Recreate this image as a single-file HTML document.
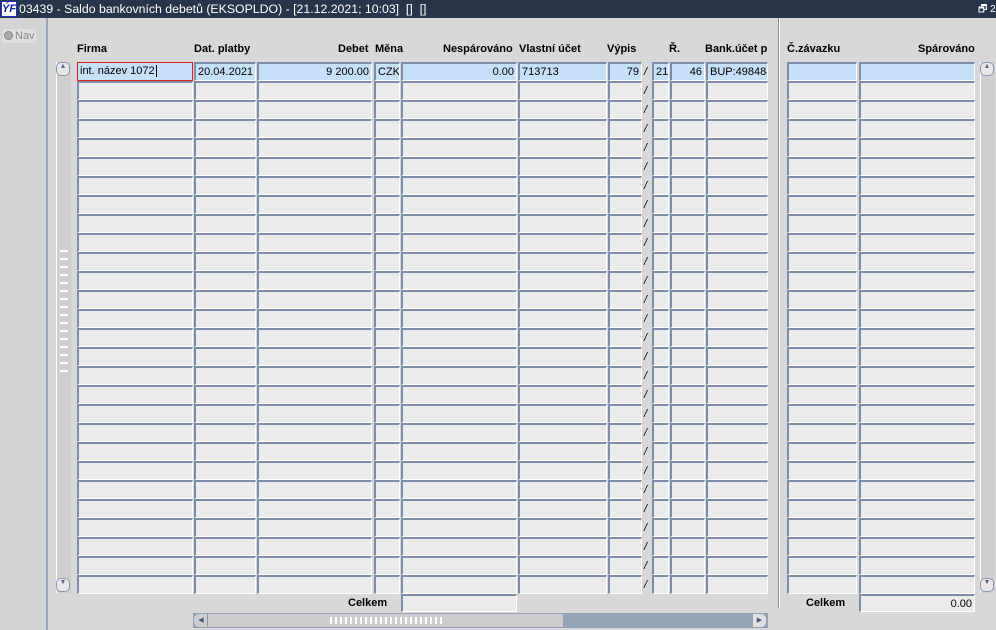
<!DOCTYPE html>
<html><head><meta charset="utf-8"><style>
*{margin:0;padding:0;box-sizing:border-box}
body{width:996px;height:630px;background:#d8d8d8;font-family:"Liberation Sans",Arial,sans-serif;font-size:11px;position:relative;overflow:hidden;color:#000}
.a{position:absolute}
.title{left:0;top:0;width:996px;height:18px;background:#27344a;color:#fff;font-size:12.3px;line-height:18px;padding-left:19px}
.logo{left:1px;top:1px;width:16px;height:16px;background:#fff;border:1px solid #2030c0;color:#1020c0;font:bold italic 11px "Liberation Sans";line-height:14px;text-align:center}
.c{position:absolute;height:19px;background:#ebebeb;border-top:2px solid #7d8ca8;border-left:2px solid #7d8ca8;border-right:1px solid #fff;border-bottom:1px solid #fff;line-height:16px;padding:0 2px;white-space:nowrap;overflow:hidden}
.s{background:#c6e0f8}
.r{text-align:right}
.h{position:absolute;top:43px;font-weight:bold;font-size:11px}
.sl{position:absolute;font-size:11px;font-style:italic}
</style></head><body>
<div class="a title">03439 - Saldo bankovních debetů (EKSOPLDO) - [21.12.2021; 10:03]&nbsp; [] &nbsp;[]</div>
<div class="a logo">ÝF</div>
<div class="a" style="left:978px;top:2px;color:#fff;font-size:10px">🗗 2</div>
<div class="a" style="left:0;top:18px;width:48px;height:612px;background:#d4d4d4;border-right:2px solid #9aa6bb"></div>
<div class="a" style="left:3px;top:29px;width:33px;height:14px;background:#e0e0e0;color:#888;font-size:11px;line-height:14px;padding-left:12px">Nav</div>
<div class="a" style="left:4px;top:31px;width:9px;height:9px;border-radius:50%;background:#aaa;border:1px solid #888"></div>
<div class="a" style="left:56px;top:62px;width:15px;height:531px;background:#cfcfcf;border-left:1px solid #fff"></div>
<div class="a" style="left:56px;top:62px;width:14px;height:14px;border-radius:5px;border:1px solid #8a98b0;background:#e8e8e8;font-size:7px;text-align:center;color:#5a6a88">▲</div>
<div class="a" style="left:56px;top:578px;width:14px;height:14px;border-radius:5px;border:1px solid #8a98b0;background:#e8e8e8;font-size:7px;text-align:center;color:#5a6a88">▼</div>
<div class="a" style="left:60px;top:246px;width:8px;height:130px;background:repeating-linear-gradient(#cfcfcf 0 4px,#fff 4px 6px,#cfcfcf 6px 8px)"></div>
<div class="a" style="left:980px;top:62px;width:15px;height:531px;background:#cfcfcf;border-left:1px solid #fff"></div>
<div class="a" style="left:980px;top:62px;width:14px;height:14px;border-radius:5px;border:1px solid #8a98b0;background:#e8e8e8;font-size:7px;text-align:center;color:#5a6a88">▲</div>
<div class="a" style="left:980px;top:578px;width:14px;height:14px;border-radius:5px;border:1px solid #8a98b0;background:#e8e8e8;font-size:7px;text-align:center;color:#5a6a88">▼</div>
<div class="a" style="left:778px;top:18px;width:2px;height:590px;background:#8a8a8a;border-right:1px solid #fff"></div>
<div class="h" style="left:77px">Firma</div>
<div class="h" style="left:194px">Dat. platby</div>
<div class="h" style="left:338px">Debet</div>
<div class="h" style="left:375px">Měna</div>
<div class="h" style="left:443px">Nespárováno</div>
<div class="h" style="left:519px">Vlastní účet</div>
<div class="h" style="left:607px">Výpis</div>
<div class="h" style="left:669px">Ř.</div>
<div class="h" style="left:705px;width:64px;overflow:hidden;white-space:nowrap">Bank.účet p</div>
<div class="h" style="left:787px">Č.závazku</div>
<div class="h" style="left:918px">Spárováno</div>
<div id="g"></div>
<div class="c s" style="left:77px;top:62px;width:116px;border:1px solid #e02020;line-height:17px">int. název 1072<span style="border-left:1px solid #000;margin-left:1px"></span></div>
<div class="a" style="left:348px;top:597px;font-weight:bold">Celkem</div>
<div class="c" style="left:401px;top:594px;width:116px;height:18px"></div>
<div class="a" style="left:806px;top:597px;font-weight:bold">Celkem</div>
<div class="c r" style="left:859px;top:594px;width:116px;height:18px">0.00</div>
<div class="a" style="left:193px;top:613px;width:575px;height:15px;background:#95a3b8"></div>
<div class="a" style="left:194px;top:614px;width:369px;height:13px;background:#cdcdcd;border-radius:5px 0 0 5px"></div>
<div class="a" style="left:195px;top:614px;width:13px;height:13px;border-right:1px solid #8a98b0;font-size:7px;line-height:13px;text-align:center;color:#4a5a78">◀</div>
<div class="a" style="left:330px;top:617px;width:115px;height:7px;background:repeating-linear-gradient(90deg,#fff 0 2px,transparent 2px 5px)"></div>
<div class="a" style="left:753px;top:614px;width:13px;height:13px;background:#e0e0e0;border-radius:0 5px 5px 0;font-size:7px;line-height:13px;text-align:center;color:#4a5a78">▶</div>
<script>
var cols=[[77,116],[194,62],[257,115],[374,26],[401,116],[518,89],[608,34],[652,17],[670,35],[706,62],[787,70],[859,116]];
var h='';
for(var i=0;i<28;i++){var y=62+i*19;
for(var j=0;j<cols.length;j++){if(i==0&&j==0)continue;var s=i==0?' s':'';var t='';var r='';
if(i==0){t=['','20.04.2021','9 200.00','CZK','0.00','713713','79','21','46','BUP:498484','',''][j];if(j==2||j==4||j==6||j==8)r=' r';}
h+='<div class="c'+s+r+'" style="left:'+cols[j][0]+'px;top:'+y+'px;width:'+cols[j][1]+'px">'+t+'</div>';}
h+='<div class="sl" style="left:644px;top:'+(y+4)+'px">/</div>';}
document.getElementById('g').innerHTML=h;
</script>
</body></html>
